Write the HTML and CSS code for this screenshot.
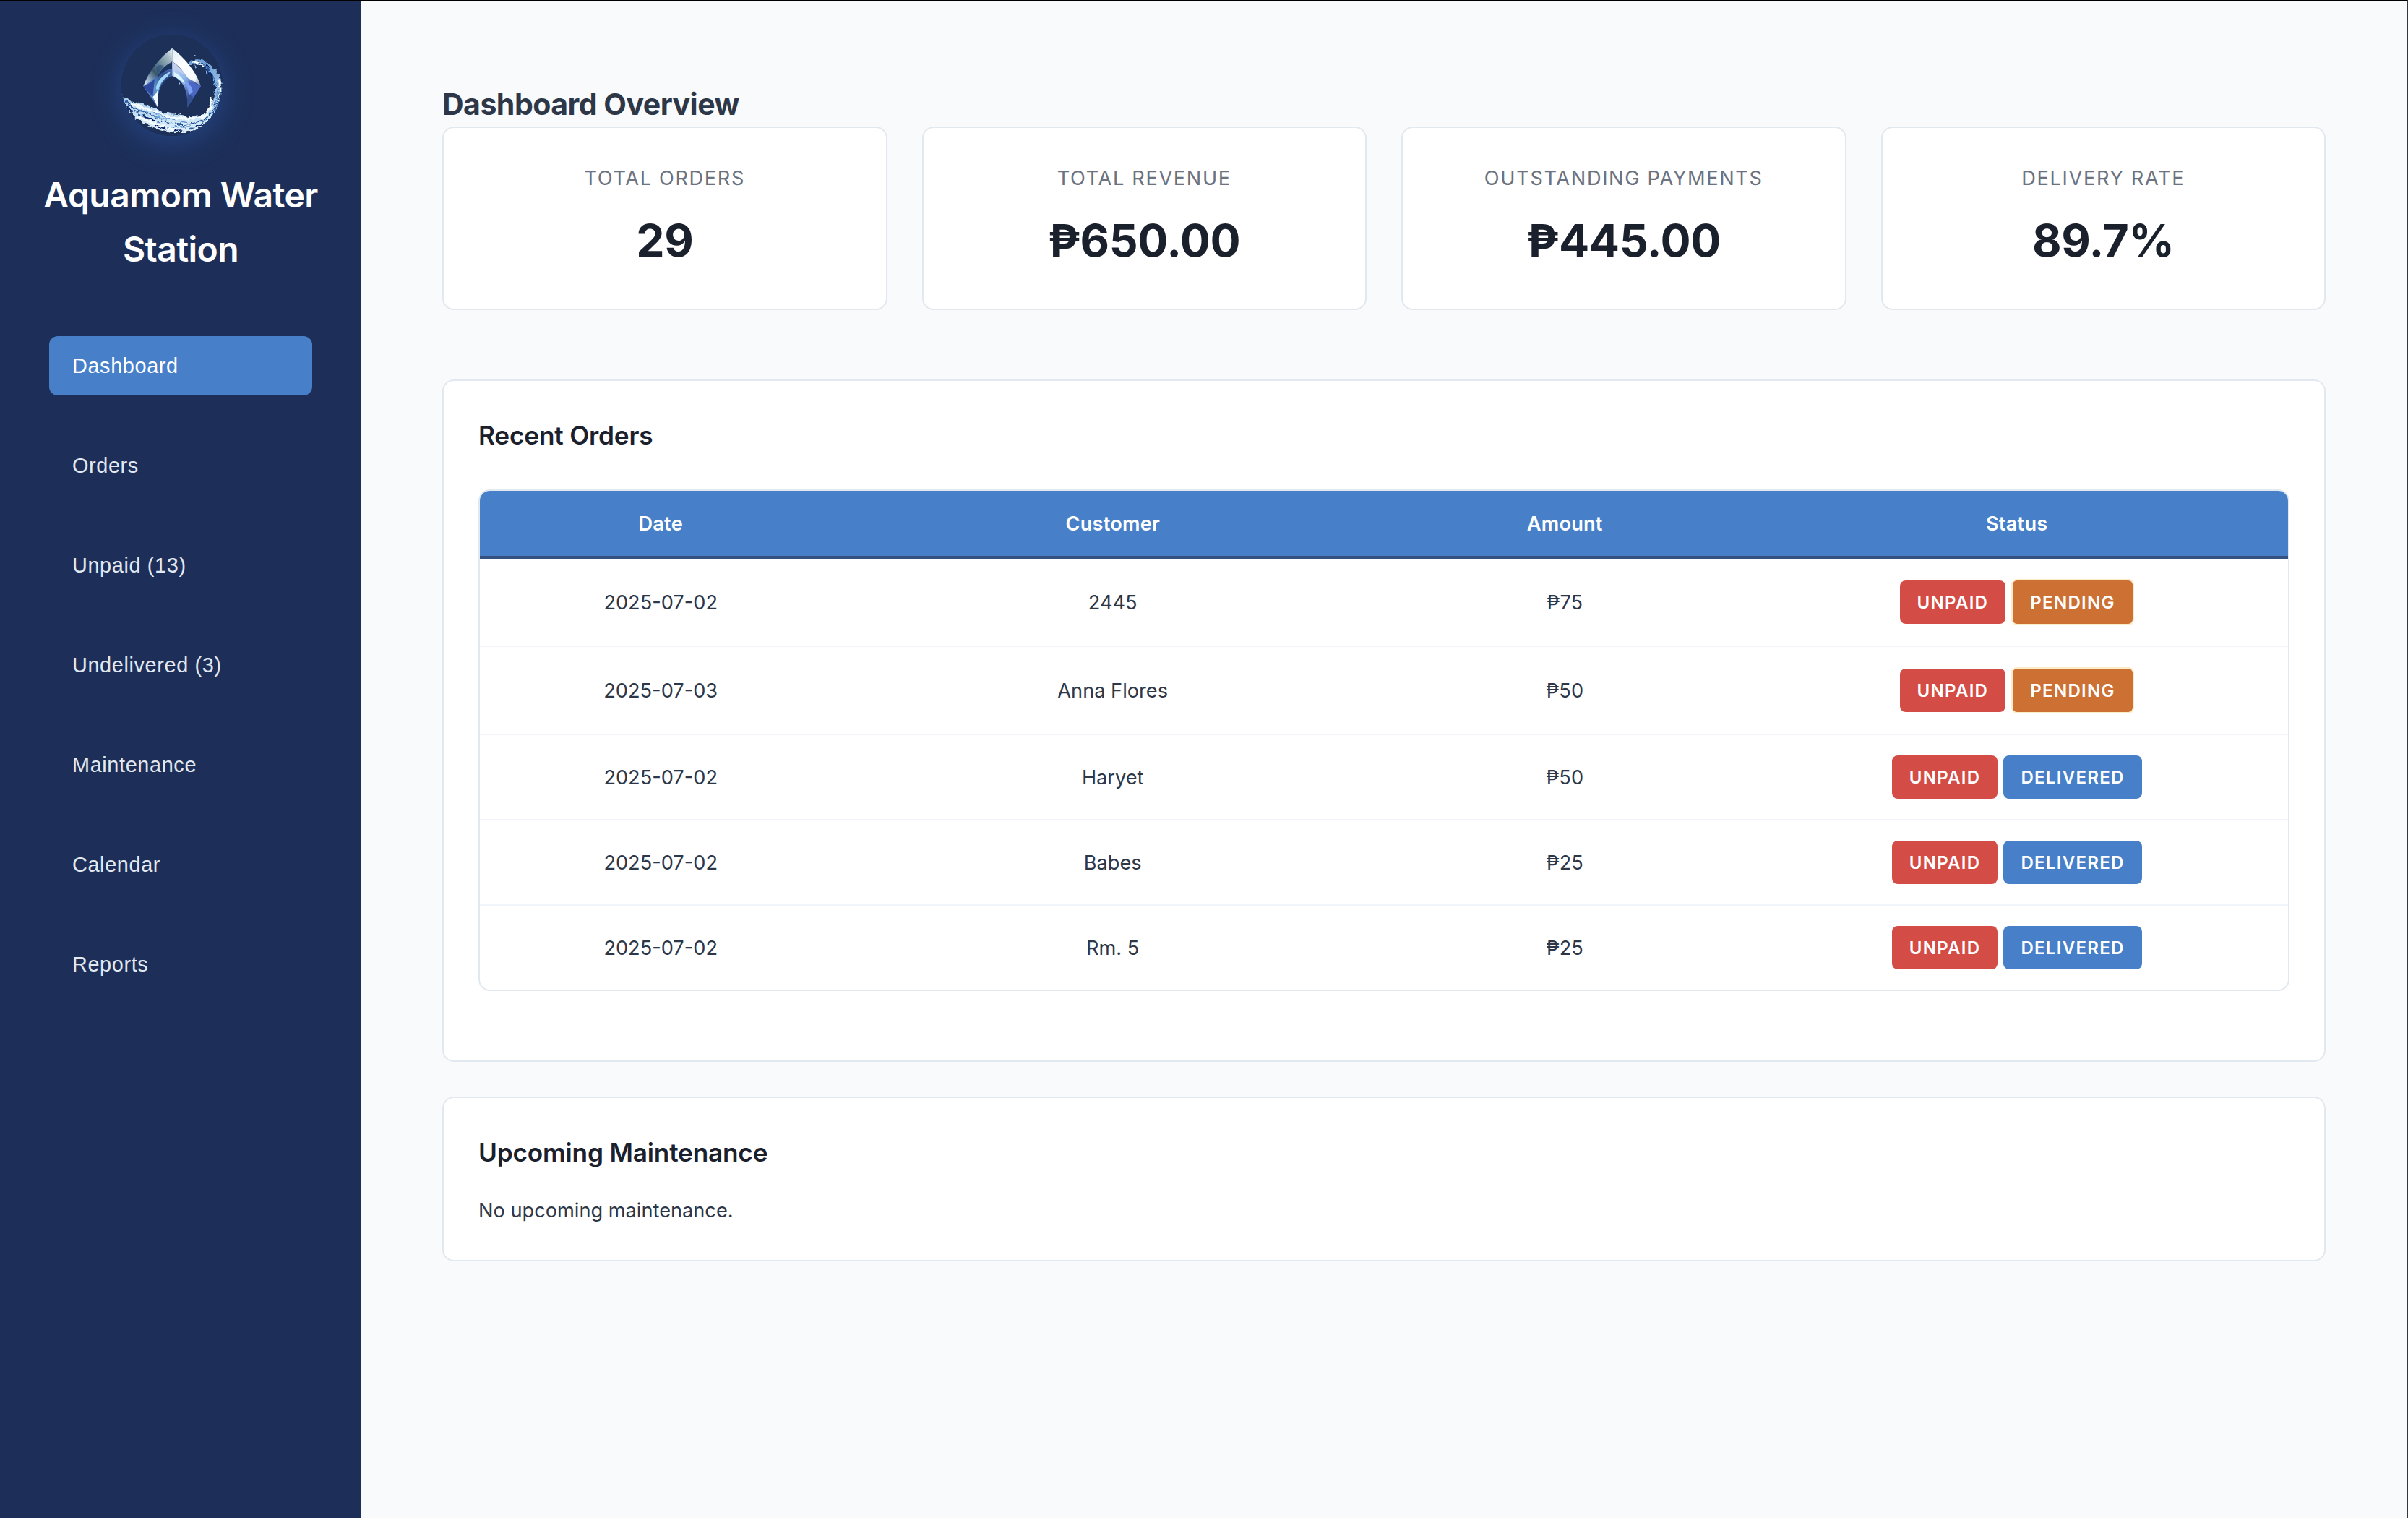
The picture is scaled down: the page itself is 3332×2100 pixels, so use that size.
FILE: index.html
```html
<!DOCTYPE html>
<html lang="en">
<head>
<meta charset="utf-8">
<title>Aquamom Water Station</title>
<link rel="stylesheet" href="styles.css">
</head>
<body>
<div class="app">
  <aside class="sidebar">
    <svg class="logo" viewBox="114 54 420 420" aria-hidden="true">
      <defs>
        <linearGradient id="tl" x1="1" y1="0" x2="0" y2="1">
          <stop offset="0" stop-color="#f4fbff"/><stop offset=".18" stop-color="#a9bcc6"/><stop offset=".45" stop-color="#5d7f92"/><stop offset=".62" stop-color="#38566b"/><stop offset=".8" stop-color="#8ea9c4"/><stop offset="1" stop-color="#ffffff"/>
        </linearGradient>
        <linearGradient id="tr" x1="0" y1="0" x2="1" y2="1">
          <stop offset="0" stop-color="#dfeefa"/><stop offset=".4" stop-color="#ffffff"/><stop offset=".8" stop-color="#f4faff"/><stop offset="1" stop-color="#5b6f96"/>
        </linearGradient>
        <linearGradient id="il" x1="1" y1="0" x2="0" y2="1">
          <stop offset="0" stop-color="#5d84c6"/><stop offset=".3" stop-color="#2d4a88"/><stop offset=".6" stop-color="#5f96cf"/><stop offset="1" stop-color="#3b5ab4"/>
        </linearGradient>
        <linearGradient id="ir" x1="0" y1="0" x2="1" y2="1">
          <stop offset="0" stop-color="#cfdcf4"/><stop offset=".4" stop-color="#8fb6ea"/><stop offset=".7" stop-color="#2f4a97"/><stop offset="1" stop-color="#6387e8"/>
        </linearGradient>
        <linearGradient id="wave" x1="0" y1="0" x2="0" y2="1">
          <stop offset="0" stop-color="#6f9fd4"/><stop offset=".6" stop-color="#b2d4ee"/><stop offset="1" stop-color="#e0f1fb"/>
        </linearGradient>
        <filter id="rough" x="-10%" y="-10%" width="120%" height="120%">
          <feTurbulence type="fractalNoise" baseFrequency=".06" numOctaves="3" seed="4"/>
          <feDisplacementMap in="SourceGraphic" scale="22" xChannelSelector="R" yChannelSelector="G"/>
        </filter>
        <clipPath id="disc"><circle cx="324" cy="264" r="210"/></clipPath>
      </defs>
      <circle cx="324" cy="264" r="210" fill="#1d3058"/>
      <g clip-path="url(#disc)">
        <g filter="url(#rough)" fill="none" stroke-linecap="round">
          <path fill="url(#wave)" d="M117 303C150 340 205 338 250 358C300 386 345 380 385 392C430 396 468 388 480 360C503 318 504 275 495 240C484 202 456 176 424 175C410 174 398 180 387 178C400 160 425 152 450 160C492 176 524 216 531 262C536 330 502 390 462 422C430 448 390 464 350 458C300 462 258 448 215 426C170 408 130 360 117 303Z"/>
          <path stroke="#f6fdff" stroke-width="9" d="M150 342C200 352 240 372 292 388M180 392C220 412 262 432 330 446M300 392C350 400 400 408 458 392M520 240C530 280 520 330 496 362M410 168C430 162 444 170 456 182M487 318C490 350 474 384 452 400"/>
          <path stroke="#5d93cc" stroke-width="4" d="M240 372C290 404 340 410 390 420M300 440C340 430 380 444 420 436M510 250C520 280 512 320 496 350M170 360C220 370 250 396 300 408"/>
          <path stroke="#1c4d96" stroke-width="3.5" d="M130 330C170 372 220 372 262 400M150 362C195 388 232 400 275 420M280 412C320 420 350 430 396 428M430 164C470 180 496 214 506 262M458 184C482 206 494 232 500 268M520 290C516 330 500 370 470 396M528 270C530 320 510 360 490 384M400 424C430 420 458 408 474 392M400 446C430 436 450 424 470 404"/>
          <path stroke="#061d63" stroke-width="5" d="M205 394L250 410M258 430L300 446M334 452L362 450M462 206L478 214M484 208L492 240M500 268L504 300M428 432L446 424M466 180L478 190M128 338L160 376"/>
        </g>
        <g fill="#9cc6e8"><circle cx="419" cy="141" r="3"/><path d="M418 176L426 190L421 194ZM464 200L473 214L466 216ZM352 250L358 256L353 264Z"/></g>
        <path fill="#2b4a94" d="M205 268L325 165L444 268L388 356C390 290 374 244 325 225C276 244 262 290 264 354Z"/>
        <path fill="url(#il)" d="M205 268L325 165V225C276 244 262 290 264 354Z"/>
        <path fill="url(#ir)" d="M444 268L325 165V225C374 244 390 290 388 356Z"/>
        <path fill="url(#tl)" d="M325 110C272 150 228 204 205 268C232 250 252 232 268 220C280 196 300 180 325 165Z"/>
        <path fill="url(#tr)" d="M325 110C375 150 423 204 444 268C425 252 406 243 390 234C372 204 348 180 325 165Z"/>
        <path fill="#1b3561" d="M325 167C300 182 280 198 268 220L262 236C280 208 300 200 325 196Z"/>
        <path fill="#c3cfec" d="M325 167C348 182 364 198 378 224C362 208 344 198 325 194Z"/>
        <path fill="#2f499f" d="M205 268C222 262 238 252 252 238L244 312Z"/>
        <path fill="#9fd7f7" d="M258 280C256 256 280 222 318 208L306 228C286 240 272 262 268 282Z"/>
        <path fill="#d8f6ff" d="M332 210C360 222 372 240 378 258C362 246 344 232 332 226Z"/>
        <path fill="#f2fbff" d="M244 312C254 306 262 292 268 276C264 300 265 326 264 354Z"/>
        <path fill="#4a68c4" d="M392 244L444 268L404 326Z"/>
        <path fill="#7ea0f4" d="M372 244C384 262 392 282 394 306L410 290C406 268 394 252 372 244Z"/>
        <path fill="#35508f" d="M390 300L412 312L388 356Z"/>
        <path fill="#294b78" d="M258 188C268 178 280 176 290 186C280 196 272 206 264 220Z" opacity=".6"/>
      </g>
    </svg>
    <h2 class="brand"><span>Aquamom Water</span> <span>Station</span></h2>
    <nav class="nav">
      <a class="nav-item active">Dashboard</a>
      <a class="nav-item">Orders</a>
      <a class="nav-item">Unpaid (13)</a>
      <a class="nav-item">Undelivered (3)</a>
      <a class="nav-item">Maintenance</a>
      <a class="nav-item">Calendar</a>
      <a class="nav-item">Reports</a>
    </nav>
  </aside>
  <main class="main">
    <h1 class="page-title">Dashboard Overview</h1>
    <section class="stats">
      <div class="stat"><div class="stat-label">TOTAL ORDERS</div><div class="stat-value">29</div></div>
      <div class="stat"><div class="stat-label">TOTAL REVENUE</div><div class="stat-value">₱650.00</div></div>
      <div class="stat"><div class="stat-label">OUTSTANDING PAYMENTS</div><div class="stat-value">₱445.00</div></div>
      <div class="stat"><div class="stat-label">DELIVERY RATE</div><div class="stat-value">89.7%</div></div>
    </section>
    <section class="panel">
      <h3 class="panel-title">Recent Orders</h3>
      <div class="table-wrap">
        <table class="orders">
          <thead><tr><th class="narrow">Date</th><th>Customer</th><th class="narrow">Amount</th><th>Status</th></tr></thead>
          <tbody>
            <tr class="tall"><td>2025-07-02</td><td>2445</td><td>₱75</td><td><div class="badges"><span class="badge unpaid">UNPAID</span><span class="badge pending">PENDING</span></div></td></tr>
            <tr class="tall"><td>2025-07-03</td><td>Anna Flores</td><td>₱50</td><td><div class="badges"><span class="badge unpaid">UNPAID</span><span class="badge pending">PENDING</span></div></td></tr>
            <tr><td>2025-07-02</td><td>Haryet</td><td>₱50</td><td><div class="badges"><span class="badge unpaid">UNPAID</span><span class="badge delivered">DELIVERED</span></div></td></tr>
            <tr><td>2025-07-02</td><td>Babes</td><td>₱25</td><td><div class="badges"><span class="badge unpaid">UNPAID</span><span class="badge delivered">DELIVERED</span></div></td></tr>
            <tr><td>2025-07-02</td><td>Rm. 5</td><td>₱25</td><td><div class="badges"><span class="badge unpaid">UNPAID</span><span class="badge delivered">DELIVERED</span></div></td></tr>
          </tbody>
        </table>
      </div>
    </section>
    <section class="panel">
      <h3 class="panel-title">Upcoming Maintenance</h3>
      <p class="empty">No upcoming maintenance.</p>
    </section>
  </main>
</div>
</body>
</html>
```
FILE: styles.css
```css
* { box-sizing: border-box; }

body {
  margin: 0;
  background: #f9fafc;
  color: #2d3748;
  font-family: Inter, "Liberation Sans", sans-serif;
  font-size: 27.2px;
}

h1, h2, h3, p { margin: 0; }

.app {
  position: relative;
  display: flex;
  height: 2100px;
  overflow: hidden;
}

/* window edge: hairline on top, darker strip on the right */
.app::after {
  content: "";
  position: absolute;
  inset: 0;
  border-top: 1px solid #000;
  border-right: 2px solid #36383c;
  pointer-events: none;
}

.sidebar {
  display: flex;
  flex-direction: column;
  flex: none;
  width: 500px;
  padding: 48px 0 0;
  background: #1d2f59;
}

.logo {
  align-self: center;
  width: 140px;
  height: 140px;
  margin-right: 24px;
  border-radius: 50%;
  box-shadow: 0 8px 40px rgba(49, 104, 200, .4);
}

.brand {
  display: flex;
  flex-direction: column;
  align-items: center;
  margin-top: 44px;
  color: #fff;
  font-size: 48px;
  font-weight: 600;
  letter-spacing: -.55px;
  line-height: 75px;
}

.nav {
  display: flex;
  flex-direction: column;
  gap: 56px;
  margin: 83px 68px 0;
}

.nav-item {
  height: 82px;
  padding: 0 32px;
  border-radius: 12px;
  color: #e2e8f0;
  font-family: "Liberation Sans", Arial, sans-serif;
  font-size: 28.8px;
  letter-spacing: .65px;
  line-height: 82px;
}

.nav-item.active {
  background: #4780c8;
  color: #fff;
}

.main {
  flex: 1;
  padding: 113px 114px 0 112px;
}

.page-title {
  margin-bottom: -1px;
  font-size: 41px;
  font-weight: 700;
  letter-spacing: -.5px;
  line-height: 63px;
}

.stats {
  display: grid;
  grid-template-columns: repeat(4, 1fr);
  gap: 48px;
  margin-bottom: 96px;
}

.stat {
  height: 254px;
  padding-top: 48px;
  border: 2px solid #e2e8f0;
  border-radius: 16px;
  background: #fff;
  text-align: center;
}

.stat-label {
  color: #6b7280;
  line-height: 44px;
  letter-spacing: 1.65px;
}

.stat-value {
  margin-top: 23px;
  color: #1a202c;
  font-size: 62.5px;
  font-weight: 700;
  letter-spacing: -.4px;
  line-height: 80px;
}

.panel {
  margin-bottom: 48px;
  padding: 48px;
  border: 2px solid #e2e8f0;
  border-radius: 16px;
  background: #fff;
}

.panel-title {
  color: #1a202c;
  font-size: 35.2px;
  font-weight: 600;
  letter-spacing: -.18px;
  line-height: 54px;
}

.table-wrap {
  margin: 48px 0;
  border: 2px solid #e2e8f0;
  border-radius: 16px;
  overflow: hidden;
}

.orders {
  width: 100%;
  border-spacing: 0;
  table-layout: fixed;
  text-align: center;
}

.orders th {
  width: 30%;
  height: 94px;
  padding: 0;
  border-bottom: 4px solid #34517f;
  background: #4780c8;
  color: #fff;
  font-weight: 600;
  letter-spacing: .2px;
}

.orders th.narrow { width: 20%; }

.orders td {
  height: 118px;
  padding: 0;
  border-bottom: 2px solid #f1f5f9;
}

.orders .tall td { height: 122px; }

.orders tbody tr:last-child td {
  height: 116px;
  border-bottom: 0;
}

.badges {
  display: flex;
  align-items: center;
  justify-content: center;
  gap: 8px;
}

.badge {
  height: 60px;
  padding: 0 24px;
  border-radius: 8px;
  color: #fff;
  font-size: 24px;
  font-weight: 600;
  letter-spacing: 1.3px;
  line-height: 61px;
}

.unpaid { background: #d34c46; }
.delivered { background: #4780c8; }

.pending {
  height: 64px;
  border: 2px solid #feebc8;
  background: #cd7033;
}

.empty {
  margin-top: 32px;
  margin-bottom: -1px;
  line-height: 43px;
}
```
